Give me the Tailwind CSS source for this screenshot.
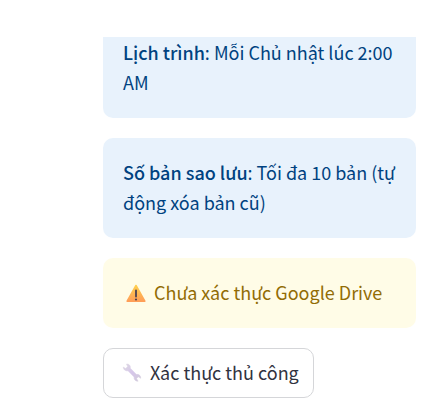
<!DOCTYPE html>
<html lang="vi">
<head>
<meta charset="utf-8">
<meta name="viewport" content="width=device-width, initial-scale=1">
<title>Sao lưu</title>
<script src="https://cdn.jsdelivr.net/npm/@tailwindcss/browser@4"></script>
</head>
<body class="bg-white font-['Source_Sans_Pro','Noto_Sans_CJK_SC','Noto_Sans',sans-serif] text-[18px] leading-[30px]">
<main class="flex flex-col items-start gap-5 pt-[37px] pr-8 pl-[103px]">
  <section class="w-full rounded-b-[10px] bg-[#e8f2fc] pr-4 pb-[21px] pl-5 text-[#004280]">
    <p><strong class="font-medium">Lịch trình</strong>: Mỗi Chủ nhật lúc 2:00 AM</p>
  </section>
  <section class="w-full rounded-[10px] bg-[#e8f2fc] pt-[19px] pr-4 pb-[21px] pl-5 text-[#004280]">
    <p><strong class="font-medium">Số bản sao lưu</strong>: Tối đa 10 bản (tự động xóa bản cũ)</p>
  </section>
  <section role="alert" class="flex w-full items-center gap-[5px] rounded-[10px] bg-[#fffce7] pt-[19px] pr-4 pb-[21px] pl-5 text-[#926c05]">
    <svg class="size-[26px] shrink-0" viewBox="0 0 26 26" aria-hidden="true">
      <defs><linearGradient id="amber" x1="0" y1="0" x2="0" y2="1"><stop offset="0" stop-color="#ffcf4d"/><stop offset="1" stop-color="#ff9e58"/></linearGradient></defs>
      <path d="M13 6.500 4.200 22.200h17.600Z" fill="url(#amber)" stroke="url(#amber)" stroke-width="1.600" stroke-linejoin="round"/>
      <path d="M13 11.500v6" stroke="#4b4051" stroke-width="1.800" stroke-linecap="round"/>
      <circle cx="13" cy="20.500" r="1.100" fill="#4b4051"/>
    </svg>
    <p>Chưa xác thực Google Drive</p>
  </section>
  <button type="button" class="flex h-[50px] items-center gap-1.5 rounded-[10px] border border-[#d5d6d9] bg-white px-3.5 pb-0.5 text-[#31333f]">
    <svg class="size-[26px] shrink-0" viewBox="0 0 26 26" aria-hidden="true">
      <defs><linearGradient id="steel" x1="0" y1="0" x2="1" y2="1"><stop offset="0" stop-color="#dedae2"/><stop offset=".5" stop-color="#d6c6ea"/><stop offset="1" stop-color="#d2ccda"/></linearGradient></defs>
      <path d="M8.500 5c2.400-.3 4.300 1.500 3.800 4.200l6.100 6.200c2.500-.4 4.600 1.400 4.300 3.900l-2.400-1.500-1.700 1.800 1.500 2.600c-2.500.2-4.400-1.600-4-4.200L10 11.800C7.300 12.300 5.200 10.500 5.200 8l2.500 1.500 1.900-1.900Z" fill="url(#steel)" stroke="url(#steel)" stroke-width=".5" stroke-linejoin="round"/>
    </svg>
    <span>Xác thực thủ công</span>
  </button>
</main>
</body>
</html>
